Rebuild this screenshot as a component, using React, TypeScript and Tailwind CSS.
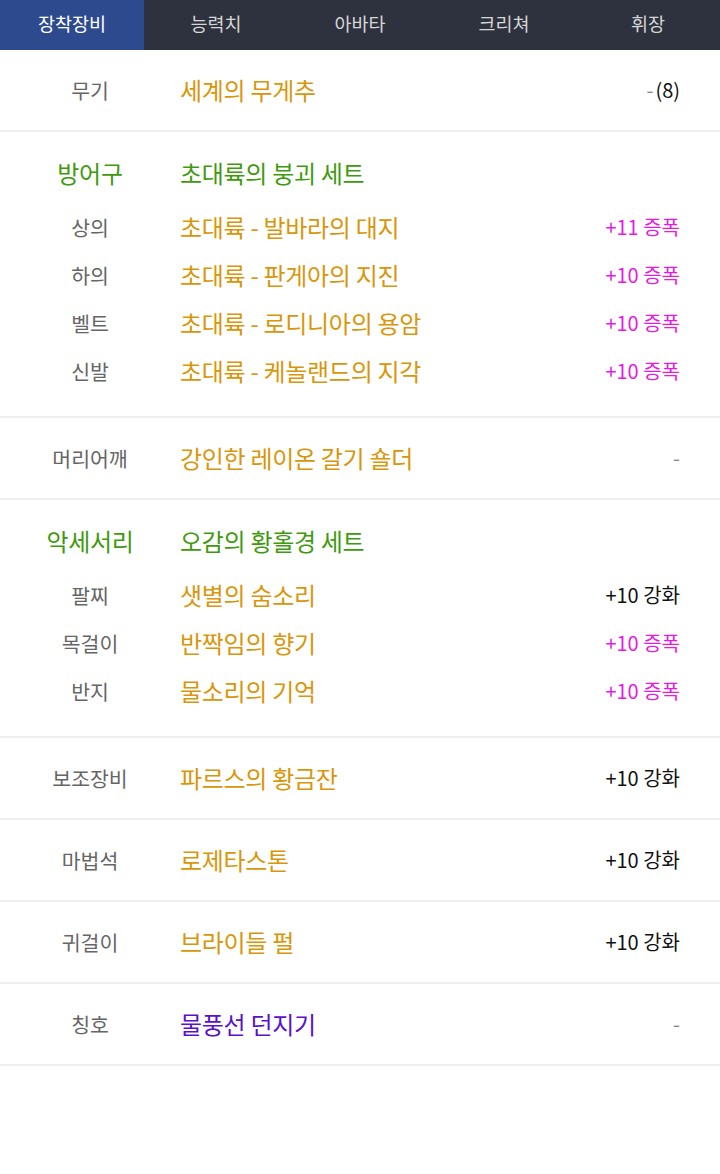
const tabs = ["장착장비", "능력치", "아바타", "크리쳐", "휘장"];

type Row = { label: string; name: string; value?: string; kind?: "boost" | "plain" | "dash" | "count"; color?: string };

const gold = "text-[#d9960a]";

function ValueText({ row }: { row: Row }) {
  if (row.kind === "boost") return <span className="text-[20px] text-[#e619e6]">{row.value}</span>;
  if (row.kind === "plain") return <span className="text-[20px] text-[#111]">{row.value}</span>;
  if (row.kind === "count")
    return (
      <span className="text-[20px] text-[#111]">
        <span className="pr-[2px] text-[#888]">-</span>
        {row.value}
      </span>
    );
  return <span className="text-[20px] text-[#888]">-</span>;
}

function ItemRow({ row, tall }: { row: Row; tall?: boolean }) {
  return (
    <div className={`flex items-center ${tall ? "h-20" : "h-12"}`}>
      <div className="w-[180px] text-center text-[20.5px] text-[#666]">{row.label}</div>
      <div className={`flex-1 text-[24px] tracking-[-0.3px] ${row.color ?? gold}`}>{row.name}</div>
      <div className="pr-10 text-right">
        <ValueText row={row} />
      </div>
    </div>
  );
}

function SetSection({ label, setName, rows }: { label: string; setName: string; rows: Row[] }) {
  return (
    <section className="border-b-2 border-[#efefef] pt-[17px] pb-[21px]">
      <div className="mb-[6px] flex h-12 items-center text-[24px] tracking-[-0.3px] text-[#3f9a0e]">
        <div className="w-[180px] text-center">{label}</div>
        <div>{setName}</div>
      </div>
      {rows.map((r) => (
        <ItemRow key={r.label} row={r} />
      ))}
    </section>
  );
}

function Single({ row }: { row: Row }) {
  return (
    <section className="border-b-2 border-[#efefef]">
      <ItemRow row={row} tall />
    </section>
  );
}

export default function App() {
  return (
    <div className="min-h-[1174px] w-[720px] bg-white font-['Noto_Sans_CJK_KR','Noto_Sans',sans-serif]">
      <nav className="grid h-[50px] grid-cols-5 bg-[#2d323e]">
        {tabs.map((t, i) => (
          <div
            key={t}
            className={`flex items-center justify-center pb-[3px] text-[18.5px] ${
              i === 0 ? "bg-[#2e4a8e] text-white" : "text-[#d6d6d6]"
            }`}
          >
            {t}
          </div>
        ))}
      </nav>

      <Single row={{ label: "무기", name: "세계의 무게추", value: "(8)", kind: "count" }} />

      <SetSection
        label="방어구"
        setName="초대륙의 붕괴 세트"
        rows={[
          { label: "상의", name: "초대륙 - 발바라의 대지", value: "+11 증폭", kind: "boost" },
          { label: "하의", name: "초대륙 - 판게아의 지진", value: "+10 증폭", kind: "boost" },
          { label: "벨트", name: "초대륙 - 로디니아의 용암", value: "+10 증폭", kind: "boost" },
          { label: "신발", name: "초대륙 - 케놀랜드의 지각", value: "+10 증폭", kind: "boost" },
        ]}
      />

      <Single row={{ label: "머리어깨", name: "강인한 레이온 갈기 숄더", kind: "dash" }} />

      <SetSection
        label="악세서리"
        setName="오감의 황홀경 세트"
        rows={[
          { label: "팔찌", name: "샛별의 숨소리", value: "+10 강화", kind: "plain" },
          { label: "목걸이", name: "반짝임의 향기", value: "+10 증폭", kind: "boost" },
          { label: "반지", name: "물소리의 기억", value: "+10 증폭", kind: "boost" },
        ]}
      />

      <Single row={{ label: "보조장비", name: "파르스의 황금잔", value: "+10 강화", kind: "plain" }} />
      <Single row={{ label: "마법석", name: "로제타스톤", value: "+10 강화", kind: "plain" }} />
      <Single row={{ label: "귀걸이", name: "브라이들 펄", value: "+10 강화", kind: "plain" }} />
      <Single row={{ label: "칭호", name: "물풍선 던지기", kind: "dash", color: "text-[#5a10cc]" }} />
    </div>
  );
}
